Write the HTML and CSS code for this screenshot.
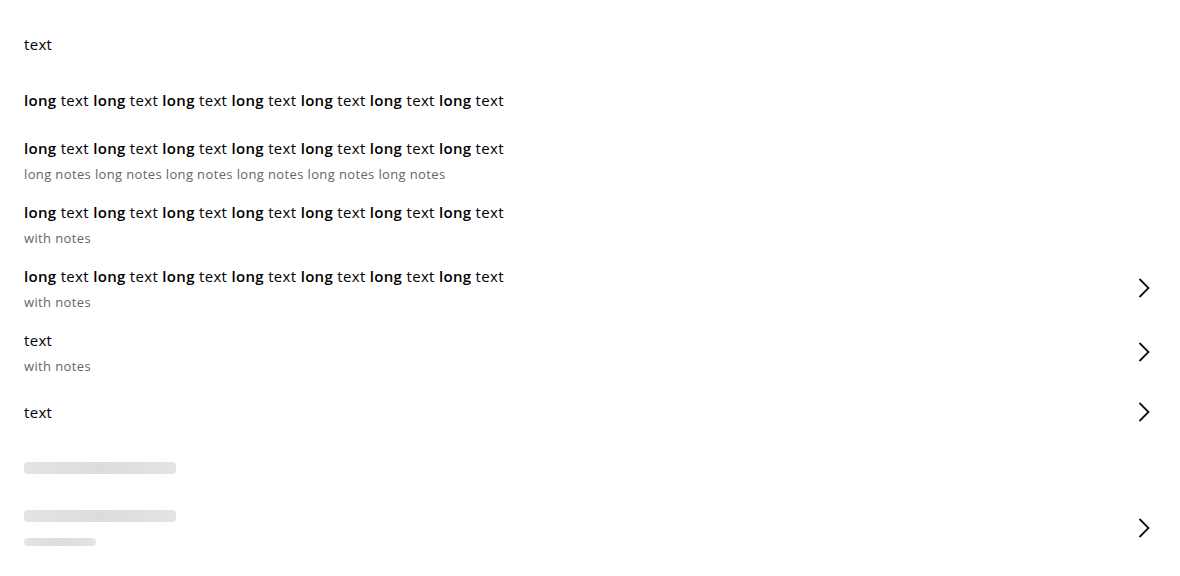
FILE: index.html
```html
<!DOCTYPE html>
<html>
<head>
<meta charset="utf-8">
<link rel="stylesheet" href="styles.css">
</head>
<body>
<div class="list">
  <div class="row single"><div class="content"><div class="title">text</div></div></div>
  <div class="row single"><div class="content"><div class="title"><b>long</b> text <b>long</b> text <b>long</b> text <b>long</b> text <b>long</b> text <b>long</b> text <b>long</b> text</div></div></div>
  <div class="row double"><div class="content"><div class="title"><b>long</b> text <b>long</b> text <b>long</b> text <b>long</b> text <b>long</b> text <b>long</b> text <b>long</b> text</div><div class="notes">long notes long notes long notes long notes long notes long notes</div></div></div>
  <div class="row double"><div class="content"><div class="title"><b>long</b> text <b>long</b> text <b>long</b> text <b>long</b> text <b>long</b> text <b>long</b> text <b>long</b> text</div><div class="notes">with notes</div></div></div>
  <div class="row double"><div class="content"><div class="title"><b>long</b> text <b>long</b> text <b>long</b> text <b>long</b> text <b>long</b> text <b>long</b> text <b>long</b> text</div><div class="notes">with notes</div></div>
    <svg class="chev" viewBox="0 0 24 24"><polyline points="7.5,3 16.5,12 7.5,21"/></svg></div>
  <div class="row double"><div class="content"><div class="title">text</div><div class="notes">with notes</div></div>
    <svg class="chev" viewBox="0 0 24 24"><polyline points="7.5,3 16.5,12 7.5,21"/></svg></div>
  <div class="row single"><div class="content"><div class="title">text</div></div>
    <svg class="chev" viewBox="0 0 24 24"><polyline points="7.5,3 16.5,12 7.5,21"/></svg></div>
  <div class="row single"><div class="content"><div class="skel skel-title"></div></div></div>
  <div class="row double"><div class="content skel-content"><div class="skel skel-title"></div><div class="skel skel-notes"></div></div>
    <svg class="chev" viewBox="0 0 24 24"><polyline points="7.5,3 16.5,12 7.5,21"/></svg></div>
</div>
</body>
</html>
```

FILE: styles.css
```css
html, body {
  margin: 0;
  padding: 0;
  background: #fff;
}
body {
  font-family: "Open Sans", "Noto Sans", sans-serif;
  color: #000;
}
.list {
  padding: 16px 0;
}
.row {
  display: flex;
  align-items: center;
  padding: 0 24px;
  box-sizing: border-box;
}
.row.single {
  height: 56px;
}
.row.double {
  height: 64px;
}
.content {
  flex: 1;
  display: flex;
  flex-direction: column;
  gap: 4px;
}
.title {
  font-size: 15px;
  line-height: 24px;
  letter-spacing: 0.32px;
  white-space: nowrap;
}
.title b {
  font-weight: 600;
}
.notes {
  font-size: 13px;
  line-height: 20px;
  letter-spacing: 0.37px;
  color: #666;
  white-space: nowrap;
}
.chev {
  width: 24px;
  height: 24px;
  flex: none;
  fill: none;
  stroke: #111;
  stroke-width: 1.8;
}
.skel {
  border-radius: 4px;
  background: linear-gradient(90deg, #e4e4e4 0%, #dcdcdc 50%, #e4e4e4 100%);
}
.skel-title {
  width: 152px;
  height: 12px;
}
.skel-content {
  gap: 16px;
}
.skel-notes {
  width: 72px;
  height: 8px;
}
```
